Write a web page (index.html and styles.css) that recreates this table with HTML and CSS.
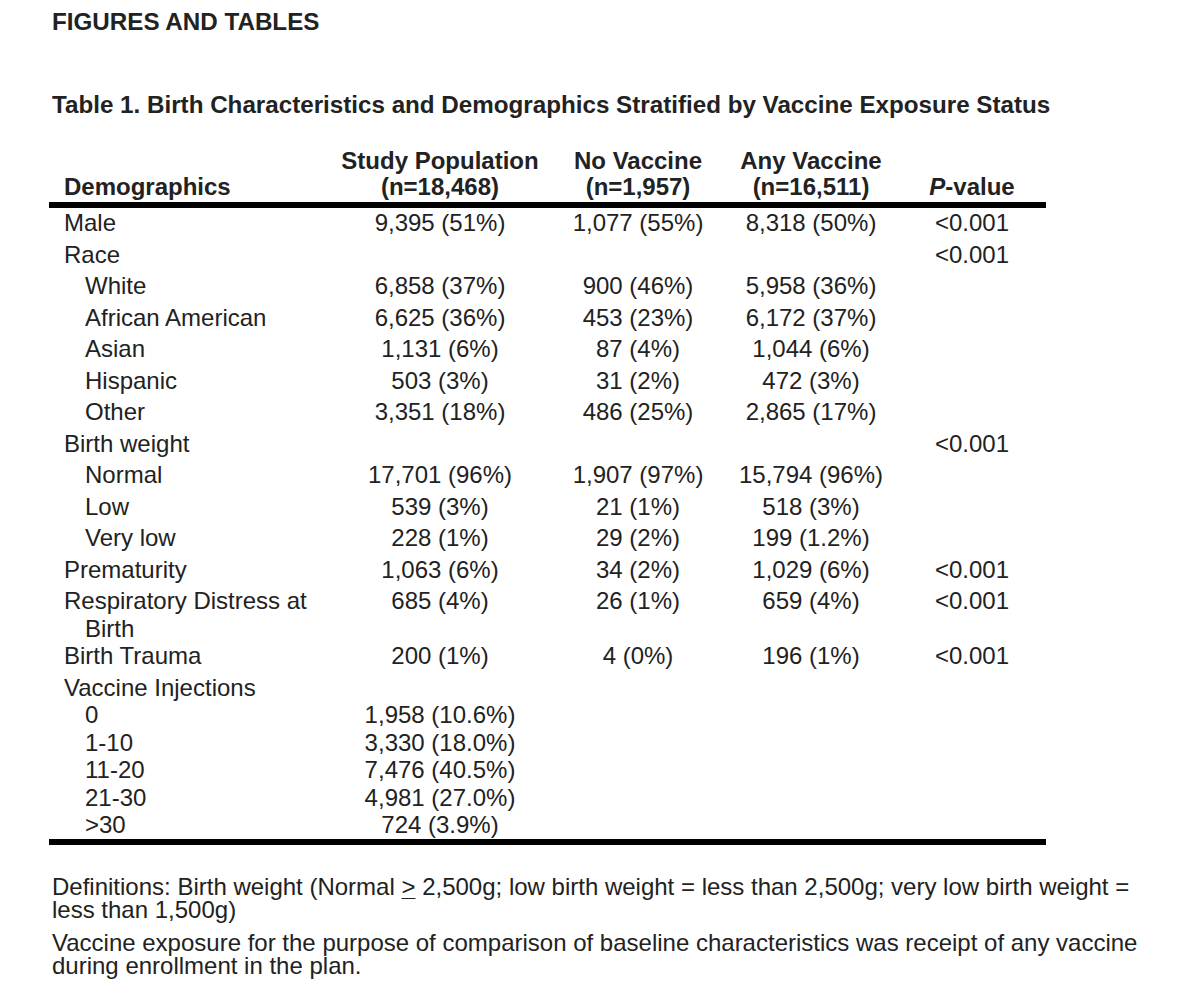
FILE: index.html
```html
<!DOCTYPE html>
<html>
<head>
<meta charset="utf-8">
<link rel="stylesheet" href="styles.css">
</head>
<body>
<div class="page">
  <h1 class="section">FIGURES AND TABLES</h1>
  <h2 class="caption">Table 1. Birth Characteristics and Demographics Stratified by Vaccine Exposure Status</h2>
  <table class="data">
    <colgroup>
      <col class="c1"><col class="c2"><col class="c3"><col class="c4"><col class="c5">
    </colgroup>
    <thead>
      <tr>
        <th class="lbl">Demographics</th>
        <th>Study Population<br>(n=18,468)</th>
        <th>No Vaccine<br>(n=1,957)</th>
        <th>Any Vaccine<br>(n=16,511)</th>
        <th class="pv"><i>P</i>-value</th>
      </tr>
    </thead>
    <tbody>
      <tr class="first"><td class="lbl">Male</td><td>9,395 (51%)</td><td>1,077 (55%)</td><td>8,318 (50%)</td><td class="pv">&lt;0.001</td></tr>
      <tr><td class="lbl">Race</td><td></td><td></td><td></td><td class="pv">&lt;0.001</td></tr>
      <tr><td class="lbl sub">White</td><td>6,858 (37%)</td><td>900 (46%)</td><td>5,958 (36%)</td><td class="pv"></td></tr>
      <tr><td class="lbl sub">African American</td><td>6,625 (36%)</td><td>453 (23%)</td><td>6,172 (37%)</td><td class="pv"></td></tr>
      <tr><td class="lbl sub">Asian</td><td>1,131 (6%)</td><td>87 (4%)</td><td>1,044 (6%)</td><td class="pv"></td></tr>
      <tr><td class="lbl sub">Hispanic</td><td>503 (3%)</td><td>31 (2%)</td><td>472 (3%)</td><td class="pv"></td></tr>
      <tr><td class="lbl sub">Other</td><td>3,351 (18%)</td><td>486 (25%)</td><td>2,865 (17%)</td><td class="pv"></td></tr>
      <tr><td class="lbl">Birth weight</td><td></td><td></td><td></td><td class="pv">&lt;0.001</td></tr>
      <tr><td class="lbl sub">Normal</td><td>17,701 (96%)</td><td>1,907 (97%)</td><td>15,794 (96%)</td><td class="pv"></td></tr>
      <tr><td class="lbl sub">Low</td><td>539 (3%)</td><td>21 (1%)</td><td>518 (3%)</td><td class="pv"></td></tr>
      <tr><td class="lbl sub">Very low</td><td>228 (1%)</td><td>29 (2%)</td><td>199 (1.2%)</td><td class="pv"></td></tr>
      <tr><td class="lbl">Prematurity</td><td>1,063 (6%)</td><td>34 (2%)</td><td>1,029 (6%)</td><td class="pv">&lt;0.001</td></tr>
      <tr class="two"><td class="lbl"><span class="line">Respiratory Distress at</span><span class="line cont">Birth</span></td><td>685 (4%)</td><td>26 (1%)</td><td>659 (4%)</td><td class="pv">&lt;0.001</td></tr>
      <tr><td class="lbl">Birth Trauma</td><td>200 (1%)</td><td>4 (0%)</td><td>196 (1%)</td><td class="pv">&lt;0.001</td></tr>
      <tr class="tight"><td class="lbl">Vaccine Injections</td><td></td><td></td><td></td><td class="pv"></td></tr>
      <tr class="tight"><td class="lbl sub2">0</td><td>1,958 (10.6%)</td><td></td><td></td><td class="pv"></td></tr>
      <tr class="tight"><td class="lbl sub2">1-10</td><td>3,330 (18.0%)</td><td></td><td></td><td class="pv"></td></tr>
      <tr class="tight"><td class="lbl sub2">11-20</td><td>7,476 (40.5%)</td><td></td><td></td><td class="pv"></td></tr>
      <tr class="tight"><td class="lbl sub2">21-30</td><td>4,981 (27.0%)</td><td></td><td></td><td class="pv"></td></tr>
      <tr class="tight last"><td class="lbl sub2">&gt;30</td><td>724 (3.9%)</td><td></td><td></td><td class="pv"></td></tr>
    </tbody>
  </table>
  <div class="notes">
    <p>Definitions: Birth weight (Normal <u>&gt;</u> 2,500g; low birth weight = less than 2,500g; very low birth weight = less than 1,500g)</p>
    <p>Vaccine exposure for the purpose of comparison of baseline characteristics was receipt of any vaccine during enrollment in the plan.</p>
  </div>
</div>
</body>
</html>
```

FILE: styles.css
```css
html, body {
  margin: 0;
  padding: 0;
  background: #ffffff;
}

body {
  font-family: "Liberation Sans", Arial, sans-serif;
  color: #222222;
}

.page {
  padding-top: 8px;
}

.section {
  margin: 0 0 0 52px;
  font-size: 24.2px;
  line-height: 28px;
  font-weight: bold;
}

.caption {
  margin: 55px 0 0 52px;
  font-size: 24.2px;
  line-height: 28px;
  font-weight: bold;
}

.data {
  margin: 29px 0 0 49px;
  width: 997px;
  table-layout: fixed;
  border-spacing: 0;
  font-size: 24px;
}

.c1 { width: 291px; }
.c2 { width: 200px; }
.c3 { width: 196px; }
.c4 { width: 150px; }
.c5 { width: 160px; }

.data th {
  font-weight: bold;
  vertical-align: bottom;
  line-height: 26px;
  padding: 0 0 2px;
  text-align: center;
  border-bottom: 6px solid #000000;
  white-space: nowrap;
}

.data td {
  vertical-align: top;
  line-height: 27.5px;
  padding: 0 0 4px;
  text-align: center;
  white-space: nowrap;
}

.data .lbl {
  text-align: left;
  padding-left: 15px;
}

.data td.sub,
.data td.sub2 {
  padding-left: 36px;
}

.line {
  display: block;
}

.line.cont {
  padding-left: 21px;
}

.data .pv {
  padding-left: 12px;
}

.data tr.first td {
  padding-top: 1px;
}

.data tr.two td,
.data tr.tight td {
  padding-bottom: 0;
}

.data tr.last td {
  border-bottom: 6px solid #000000;
}

.notes {
  margin: 30px 0 0 52px;
  width: 1100px;
  font-size: 24px;
  line-height: 23px;
}

.notes p {
  margin: 0 0 10px;
}

.notes u {
  text-decoration-thickness: 1px;
  text-underline-offset: 3px;
}
```
